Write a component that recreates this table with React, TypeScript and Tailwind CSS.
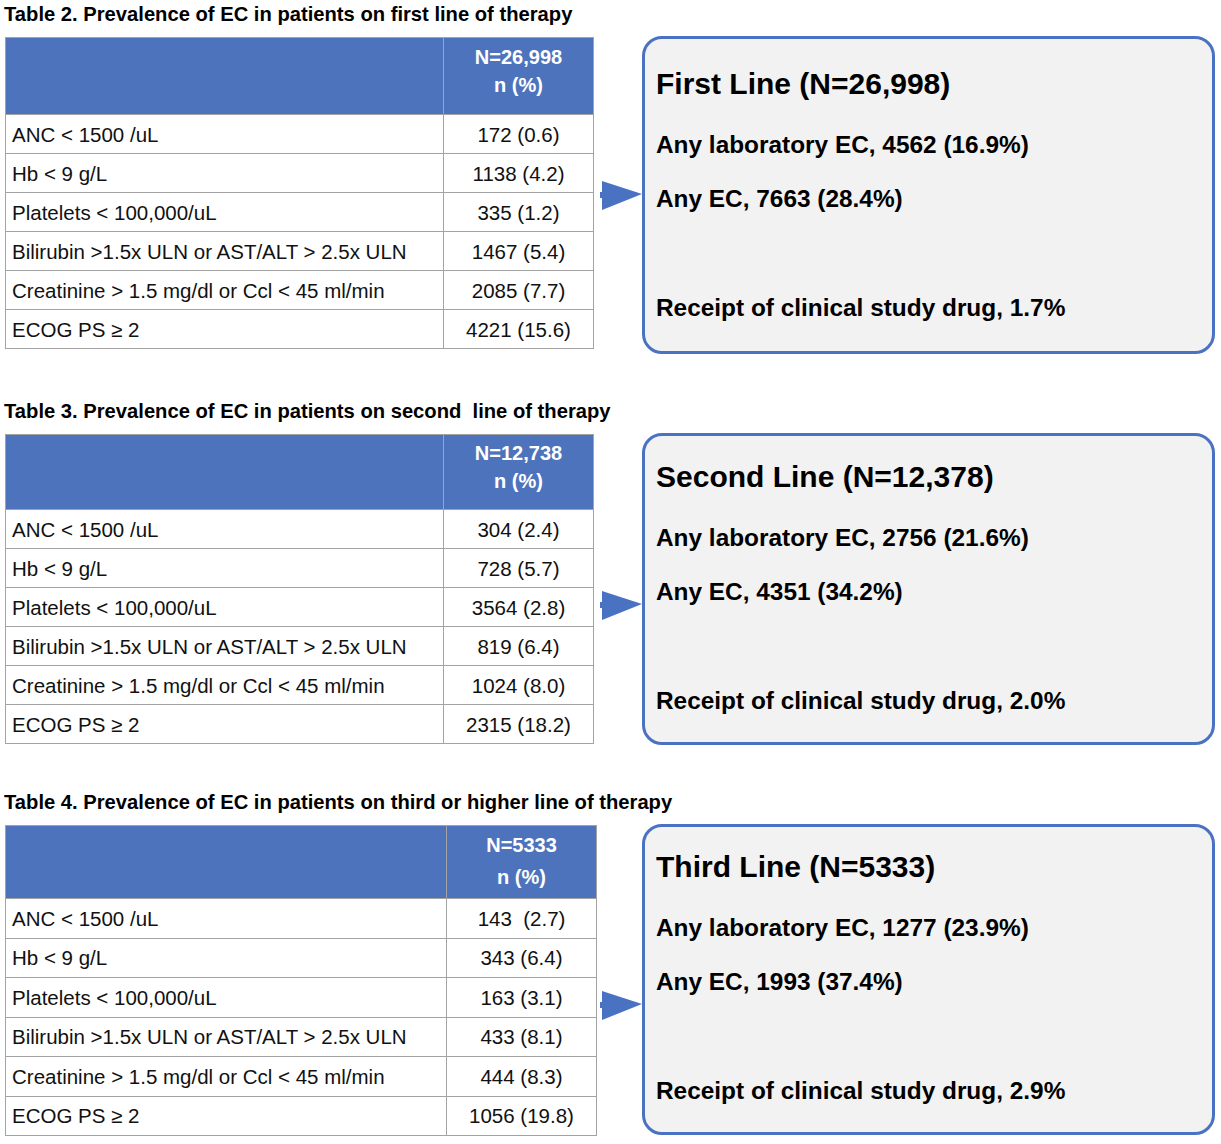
import React from 'react';

interface Section {
  title: string;
  n: string;
  rows: [string, string][];
  line: string;
  lab: string;
  any: string;
  drug: string;
  firstCol: string;
  headH: string;
  headGap: string;
  rowH: string;
  arrowTop: string;
  boxH: string;
  boxPt: string;
}

const labels = [
  'ANC < 1500 /uL',
  'Hb < 9 g/L',
  'Platelets < 100,000/uL',
  'Bilirubin >1.5x ULN or AST/ALT > 2.5x ULN',
  'Creatinine > 1.5 mg/dl or Ccl < 45 ml/min',
  'ECOG PS ≥ 2',
];

const sections: Section[] = [
  {
    title: 'Table 2. Prevalence of EC in patients on first line of therapy',
    n: 'N=26,998',
    rows: [
      [labels[0], '172 (0.6)'],
      [labels[1], '1138 (4.2)'],
      [labels[2], '335 (1.2)'],
      [labels[3], '1467 (5.4)'],
      [labels[4], '2085 (7.7)'],
      [labels[5], '4221 (15.6)'],
    ],
    line: 'First Line (N=26,998)',
    lab: 'Any laboratory EC, 4562 (16.9%)',
    any: 'Any EC, 7663 (28.4%)',
    drug: 'Receipt of clinical study drug, 1.7%',
    firstCol: 'w-[438px]',
    headH: 'h-[77px]',
    headGap: 'leading-[28px] pt-[5px]',
    rowH: 'h-[39px]',
    arrowTop: 'mt-[144px]',
    boxH: 'h-[318px]',
    boxPt: 'pt-[27px]',
  },
  {
    title: 'Table 3. Prevalence of EC in patients on second  line of therapy',
    n: 'N=12,738',
    rows: [
      [labels[0], '304 (2.4)'],
      [labels[1], '728 (5.7)'],
      [labels[2], '3564 (2.8)'],
      [labels[3], '819 (6.4)'],
      [labels[4], '1024 (8.0)'],
      [labels[5], '2315 (18.2)'],
    ],
    line: 'Second Line (N=12,378)',
    lab: 'Any laboratory EC, 2756 (21.6%)',
    any: 'Any EC, 4351 (34.2%)',
    drug: 'Receipt of clinical study drug, 2.0%',
    firstCol: 'w-[438px]',
    headH: 'h-[75px]',
    headGap: 'leading-[28px] pt-[4px]',
    rowH: 'h-[39px]',
    arrowTop: 'mt-[157px]',
    boxH: 'h-[312px]',
    boxPt: 'pt-[23px]',
  },
  {
    title: 'Table 4. Prevalence of EC in patients on third or higher line of therapy',
    n: 'N=5333',
    rows: [
      [labels[0], '143  (2.7)'],
      [labels[1], '343 (6.4)'],
      [labels[2], '163 (3.1)'],
      [labels[3], '433 (8.1)'],
      [labels[4], '444 (8.3)'],
      [labels[5], '1056 (19.8)'],
    ],
    line: 'Third Line (N=5333)',
    lab: 'Any laboratory EC, 1277 (23.9%)',
    any: 'Any EC, 1993 (37.4%)',
    drug: 'Receipt of clinical study drug, 2.9%',
    firstCol: 'w-[441px]',
    headH: 'h-[73px]',
    headGap: 'leading-[32px] pt-[3px]',
    rowH: 'h-[39.5px]',
    arrowTop: 'mt-[166px]',
    boxH: 'h-[311px]',
    boxPt: 'pt-[22px]',
  },
];

const Arrow: React.FC<{ top: string }> = ({ top }) => (
  <div className={`flex-1 flex justify-end ${top}`}>
    <svg width="42" height="29" viewBox="0 0 42 29">
      <rect x="0" y="11" width="3" height="6" fill="#4a72c2" />
      <polygon points="2,0 42,13 2,29" fill="#4a72c2" />
    </svg>
  </div>
);

const Block: React.FC<{ s: Section }> = ({ s }) => (
  <div>
    <div className="h-[24px] leading-[24px] text-[20.2px] font-bold text-black whitespace-pre">{s.title}</div>
    <div className="mt-[11px] flex items-start w-[1211px]">
      <table className="ml-[1px] border-collapse text-[20.5px] text-[#111]">
        <thead>
          <tr className="bg-[#4e73bd]">
            <th className={`${s.firstCol} ${s.headH} border border-[#a3a3a3]`}></th>
            <th className={`w-[150px] ${s.headH} border border-[#a3a3a3] align-top text-white font-bold text-[20px] ${s.headGap}`}>
              <div>{s.n}</div>
              <div>n (%)</div>
            </th>
          </tr>
        </thead>
        <tbody>
          {s.rows.map(([label, value]) => (
            <tr key={label} className={s.rowH}>
              <td className="border border-[#a3a3a3] px-[6px] leading-[24px] pt-[1px]">{label}</td>
              <td className="border border-[#a3a3a3] text-center leading-[24px] whitespace-pre pt-[1px]">{value}</td>
            </tr>
          ))}
        </tbody>
      </table>
      <Arrow top={s.arrowTop} />
      <div
        className={`w-[573px] shrink-0 ${s.boxH} -mt-px rounded-[20px] border-[3px] border-[#4a72c2] bg-[#f2f2f2] px-[11px] ${s.boxPt} font-bold text-black`}
      >
        <div className="text-[30px] leading-[36px]">{s.line}</div>
        <div className="mt-[28px] text-[24.4px] leading-[30px]">{s.lab}</div>
        <div className="mt-[24px] text-[24.4px] leading-[30px]">{s.any}</div>
        <div className="mt-[79px] text-[24.4px] leading-[30px]">{s.drug}</div>
      </div>
    </div>
  </div>
);

export default function App() {
  return (
    <div
      className="w-[1221px] h-[1144px] bg-white pl-[4px] pt-[2px] flex flex-col gap-[45px] overflow-hidden"
      style={{ fontFamily: '"Liberation Sans", Arial, sans-serif' }}
    >
      {sections.map((s) => (
        <Block key={s.title} s={s} />
      ))}
    </div>
  );
}
